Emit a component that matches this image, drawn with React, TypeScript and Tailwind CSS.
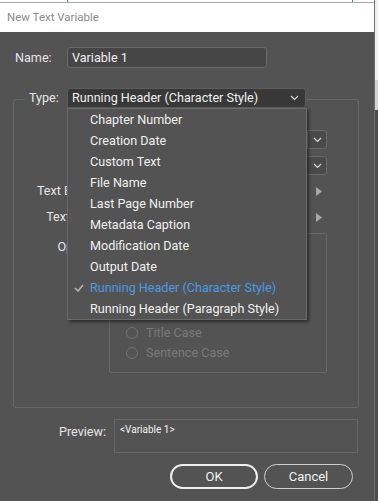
import React from "react";

const menuItems = [
  "Chapter Number",
  "Creation Date",
  "Custom Text",
  "File Name",
  "Last Page Number",
  "Metadata Caption",
  "Modification Date",
  "Output Date",
  "Running Header (Character Style)",
  "Running Header (Paragraph Style)",
];

function Chevron() {
  return (
    <svg width="9" height="6" viewBox="0 0 9 6" className="text-[#d6d6d6]">
      <path d="M1 1l3.5 3.5L8 1" fill="none" stroke="currentColor" strokeWidth="1.2" />
    </svg>
  );
}

function Triangle() {
  return (
    <svg width="6" height="9" viewBox="0 0 6 9" className="text-[#a8a8a8]">
      <path d="M0 0l6 4.5L0 9z" fill="currentColor" />
    </svg>
  );
}

function Row({ label, tall, children }: { label: string; tall?: boolean; children: React.ReactNode }) {
  return (
    <div className={`flex items-center ${tall ? "h-[20px]" : "h-[19px]"}`}>
      <span className="w-[90px] pt-[1px] text-right">{label}</span>
      <div className="ml-[6px] flex items-center">{children}</div>
    </div>
  );
}

function Radio({ label }: { label: string }) {
  return (
    <div className="flex h-[20px] items-center gap-[8px] text-[#7a7a7a]">
      <span className="h-[12px] w-[12px] rounded-full border border-[#707070]" />
      <span>{label}</span>
    </div>
  );
}

export default function App() {
  return (
    <div className="flex h-[501px] w-[378px] overflow-hidden bg-[#535353] font-['Roboto',sans-serif] text-[12.6px] text-[#e6e6e6]">
      <div className="relative flex w-[375px] flex-col border-r border-[#6f6f6f]">
        <div className="relative h-[2px] bg-white">
          <span className="absolute left-[67px] top-0 h-[2px] w-px bg-[#3b86e0]" />
          <span className="absolute left-[352px] top-0 h-[2px] w-px bg-[#3b86e0]" />
        </div>
        <div className="flex h-[30px] items-center border-t border-[#a8a8a8] bg-white pl-[7px] text-[11.5px] text-[#8a8a8a]">
          New Text Variable
        </div>

        <div className="flex flex-1 flex-col pt-[15px]">
          <div className="flex items-center pl-[15px]">
            <span className="w-[52px] pt-[1px]">Name:</span>
            <div className="flex h-[21px] w-[200px] items-center rounded-[3px] border border-[#6a6a6a] bg-[#464646] pl-[4px] pt-[1px] text-[#f0f0f0]">
              Variable 1
            </div>
          </div>

          <div className="relative z-10 mt-[20px] flex items-center pl-[25px]">
            <span className="w-[42px] bg-[#535353] pl-[4px] pt-[1px]">Type:</span>
            <div className="flex h-[20px] w-[239px] items-center justify-between rounded-[3px] border border-[#5c5c5c] bg-[#383838] pl-[4px] pr-[6px] text-[#f0f0f0]">
              <span className="pt-[1px]">Running Header (Character Style)</span>
              <Chevron />
            </div>
          </div>

          <div className="-mt-[9px] ml-[13px] h-[309px] w-[346px] rounded-[3px] border border-[#686868] pt-[30px]">
            <div className="flex flex-col gap-[7px]">
              <Row label="Style:">
                <div className="flex h-[19px] w-[217px] items-center justify-end rounded-[3px] border border-[#6a6a6a] bg-[#4a4a4a]">
                  <span className="h-full w-[2px] bg-[#7a7a7a]" />
                  <span className="flex h-full w-[18px] items-center justify-center">
                    <Chevron />
                  </span>
                </div>
              </Row>
              <Row label="Use:">
                <div className="flex h-[19px] w-[217px] items-center justify-end rounded-[3px] border border-[#6a6a6a] bg-[#4a4a4a]">
                  <span className="flex h-full w-[18px] items-center justify-center">
                    <Chevron />
                  </span>
                </div>
              </Row>
            </div>
            <div className="mt-[6px] flex flex-col gap-[6px]">
              <Row label="Text Before:" tall>
                <div className="h-[20px] w-[197px] rounded-[2px] border border-[#626262] bg-[#4c4c4c]" />
                <span className="ml-[9px] flex items-center">
                  <Triangle />
                </span>
              </Row>
              <Row label="Text After:" tall>
                <div className="h-[20px] w-[197px] rounded-[2px] border border-[#626262] bg-[#4c4c4c]" />
                <span className="ml-[9px] flex items-center">
                  <Triangle />
                </span>
              </Row>
            </div>
            <div className="mt-[6px] flex">
              <span className="w-[90px] pt-[5px] text-right">Options:</span>
              <div className="ml-[5px] h-[140px] w-[218px] rounded-[2px] border border-[#676767] pl-[16px] pt-[9px]">
                <Radio label="Change Case" />
                <Radio label="Upper Case" />
                <Radio label="Lower Case" />
                <Radio label="None" />
                <Radio label="Title Case" />
                <Radio label="Sentence Case" />
              </div>
            </div>
          </div>

          <div className="mt-[11px] flex">
            <span className="w-[106px] pt-[4px] text-right">Preview:</span>
            <div className="ml-[8px] h-[34px] w-[244px] border border-[#666666] pl-[5px] pt-[2px] text-[10px] text-[#f2f2f2]">
              &lt;Variable 1&gt;
            </div>
          </div>

          <div className="mt-[11px] flex justify-end gap-[6px] pr-[21px] text-[13px] text-[#f2f2f2]">
            <button className="flex h-[25px] w-[88px] items-center justify-center rounded-full border-2 border-[#f0f0f0]">
              OK
            </button>
            <button className="flex h-[25px] w-[89px] items-center justify-center rounded-full border-[1.5px] border-[#cfcfcf]">
              Cancel
            </button>
          </div>
        </div>

        <div className="absolute left-[67px] top-[108px] z-20 flex w-[240px] flex-col border border-[#6a6a6a] bg-[#535353] shadow-[2px_2px_3px_rgba(0,0,0,0.45)]">
          {menuItems.map((item, i) => (
            <div
              key={item}
              className={`relative flex h-[21px] items-center pl-[22px] pt-[2px] ${
                i === 8 ? "text-[#4a9be6]" : "text-[#f0f0f0]"
              }`}
            >
              {i === 8 && (
                <svg width="10" height="8" viewBox="0 0 10 8" className="absolute left-[6px] top-[7px] text-[#b4b4b4]">
                  <path d="M1 4l3 3 5-6" fill="none" stroke="currentColor" strokeWidth="1.6" />
                </svg>
              )}
              {item}
            </div>
          ))}
        </div>
      </div>

      <div className="flex w-[3px] flex-col">
        <div className="h-[80px] bg-[#efefef]" />
        <div className="h-[30px] bg-[#d2d2d2]" />
        <div className="flex-1 bg-[#4d4d4d]" />
      </div>
    </div>
  );
}
